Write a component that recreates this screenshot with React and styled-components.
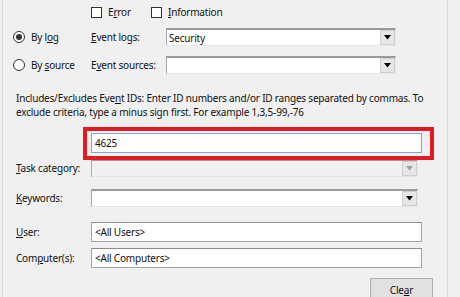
import React from "react";
import styled, { createGlobalStyle } from "styled-components";

const Global = createGlobalStyle`
  html, body { margin: 0; padding: 0; background: #f0f0f0; }
  body { font-family: "Noto Sans", "Open Sans", sans-serif; }
`;

const Screen = styled.div`
  width: 460px;
  height: 297px;
  overflow: hidden;
  background: #f0f0f0;
  font-family: "Noto Sans", "Open Sans", sans-serif;
  font-size: 10px;
  letter-spacing: -0.2px;
  color: #111;
`;

const Panel = styled.div`
  margin-left: 2px;
  width: 446px;
  height: 320px;
  border-left: 1px solid #dadada;
  border-right: 1px solid #dadada;
  box-sizing: border-box;
  display: flex;
  flex-direction: column;
`;

const CheckRow = styled.div`
  height: 24px;
  display: flex;
  align-items: center;
  padding-left: 88px;
`;

const CheckItem = styled.label`
  display: flex;
  align-items: center;
  width: ${(p) => p.$w || 60}px;
  gap: 6px;
`;

const Box = styled.span`
  width: 11px;
  height: 11px;
  border: 1px solid #333;
  background: #fff;
  box-sizing: border-box;
  display: inline-block;
  flex: none;
`;

const Row = styled.div`
  display: flex;
  align-items: center;
  margin-top: ${(p) => p.$mt || 0}px;
  height: ${(p) => p.$h || 18}px;
`;

const RadioItem = styled.label`
  display: flex;
  align-items: center;
  gap: 6px;
  width: 78px;
  padding-left: 10px;
  flex: none;
`;

const Radio = styled.span`
  width: 12px;
  height: 12px;
  border-radius: 50%;
  border: 1px solid #333;
  background: #fff;
  box-sizing: border-box;
  display: flex;
  align-items: center;
  justify-content: center;
  flex: none;
  &::after {
    content: "";
    width: 6px;
    height: 6px;
    border-radius: 50%;
    background: ${(p) => (p.$checked ? "#333" : "transparent")};
  }
`;

const InlineLabel = styled.span`
  width: 75px;
  flex: none;
`;

const FieldLabel = styled.span`
  width: 75px;
  padding-left: 13px;
  flex: none;
`;

const U = styled.span`
  text-decoration: underline;
`;

const Combo = styled.div`
  width: ${(p) => p.$w}px;
  height: 18px;
  box-sizing: border-box;
  background: ${(p) => (p.$disabled ? "#f0f0f0" : "#fff")};
  border-top: 2px solid #9a9a9a;
  border-left: 1px solid #a8a8a8;
  border-right: 1px solid #e6e6e6;
  border-bottom: 1px solid #e6e6e6;
  display: flex;
  align-items: center;
  padding-left: 2px;
  gap: 2px;
`;

const ComboText = styled.span`
  flex: 1;
  white-space: nowrap;
`;

const DropBtn = styled.span`
  width: 15px;
  height: 15px;
  box-sizing: border-box;
  background: #e6e6e6;
  border: 1px solid #cfcfcf;
  display: flex;
  align-items: center;
  justify-content: center;
  flex: none;
  align-self: flex-start;
`;

const Desc = styled.div`
  margin-top: 17px;
  padding-left: 13px;
  line-height: 14px;
  white-space: nowrap;
`;

const Line = styled.span`
  display: block;
`;

const IdRow = styled.div`
  margin-top: 14px;
  padding-left: 88px;
  display: flex;
`;

const Highlighted = styled.div`
  position: relative;
  &::before {
    content: "";
    position: absolute;
    left: -8px;
    top: -6px;
    right: -12px;
    bottom: -7px;
    border: 4px solid #e01b22;
    pointer-events: none;
  }
`;

const TextBox = styled.div`
  width: ${(p) => p.$w || 330}px;
  height: 20px;
  box-sizing: border-box;
  background: #fff;
  border: 1px solid ${(p) => (p.$focus ? "#7aa7dc" : "#a3a3a3")};
  border-top-color: ${(p) => (p.$focus ? "#7aa7dc" : "#8c8c8c")};
  display: flex;
  align-items: center;
  padding-left: 3px;
  white-space: nowrap;
`;

const ButtonRow = styled.div`
  margin-top: 10px;
  display: flex;
  justify-content: flex-end;
  padding-right: 14px;
`;

const Button = styled.div`
  width: 63px;
  height: 23px;
  box-sizing: border-box;
  background: #e1e1e1;
  border: 1px solid #adadad;
  display: flex;
  align-items: center;
  justify-content: center;
`;

const Arrow = ({ disabled }) => (
  <svg width="7" height="5" viewBox="0 0 7 5">
    <path d="M0 0H7L3.5 4.5Z" fill={disabled ? "#a0a0a0" : "#000"} />
  </svg>
);

export default function App() {
  return (
    <Screen>
      <Global />
      <Panel>
        <CheckRow>
          <CheckItem $w={60}>
            <Box />
            <span>
              E<U>r</U>ror
            </span>
          </CheckItem>
          <CheckItem $w={100}>
            <Box />
            <span>
              <U>I</U>nformation
            </span>
          </CheckItem>
        </CheckRow>

        <Row $mt={4}>
          <RadioItem>
            <Radio $checked />
            <span>
              By l<U>o</U>g
            </span>
          </RadioItem>
          <InlineLabel>
            <U>E</U>vent logs:
          </InlineLabel>
          <Combo $w={230}>
            <ComboText>Security</ComboText>
            <DropBtn>
              <Arrow />
            </DropBtn>
          </Combo>
        </Row>

        <Row $mt={10}>
          <RadioItem>
            <Radio />
            <span>
              By <U>s</U>ource
            </span>
          </RadioItem>
          <InlineLabel>
            E<U>v</U>ent sources:
          </InlineLabel>
          <Combo $w={230}>
            <ComboText />
            <DropBtn>
              <Arrow />
            </DropBtn>
          </Combo>
        </Row>

        <Desc>
          <Line>
            Includes/Excludes Eve<U>n</U>t IDs: Enter ID numbers and/or ID ranges separated by commas. To
          </Line>
          <Line>exclude criteria, type a minus sign first. For example 1,3,5-99,-76</Line>
        </Desc>

        <IdRow>
          <Highlighted>
            <TextBox $focus $w={331}>4625</TextBox>
          </Highlighted>
        </IdRow>

        <Row $mt={6}>
          <FieldLabel>
            <U>T</U>ask category:
          </FieldLabel>
          <Combo $w={327} $disabled>
            <ComboText />
            <DropBtn>
              <Arrow disabled />
            </DropBtn>
          </Combo>
        </Row>

        <Row $mt={12}>
          <FieldLabel>
            <U>K</U>eywords:
          </FieldLabel>
          <Combo $w={327}>
            <ComboText />
            <DropBtn>
              <Arrow />
            </DropBtn>
          </Combo>
        </Row>

        <Row $mt={15} $h={20}>
          <FieldLabel>
            <U>U</U>ser:
          </FieldLabel>
          <TextBox $w={331}>&lt;All Users&gt;</TextBox>
        </Row>

        <Row $mt={6} $h={20}>
          <FieldLabel>
            Com<U>p</U>uter(s):
          </FieldLabel>
          <TextBox $w={331}>&lt;All Computers&gt;</TextBox>
        </Row>

        <ButtonRow>
          <Button>
            <span>
              Cle<U>a</U>r
            </span>
          </Button>
        </ButtonRow>
      </Panel>
    </Screen>
  );
}
